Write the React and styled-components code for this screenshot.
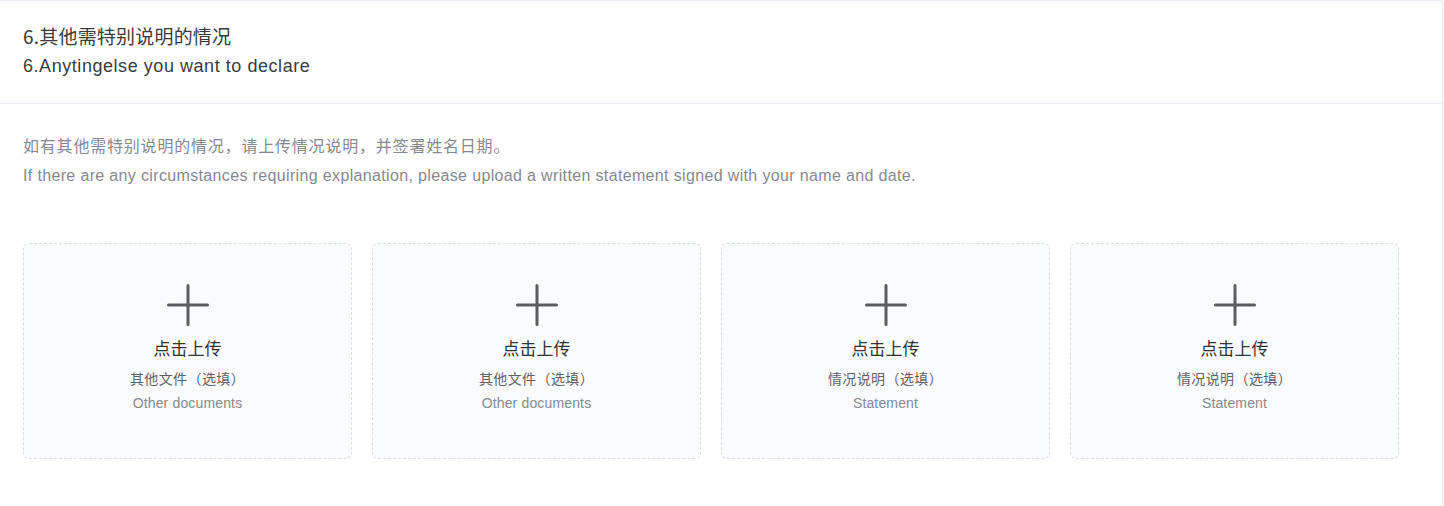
import * as React from "react"
import styled, { createGlobalStyle } from "styled-components"

const GlobalStyle = createGlobalStyle`
  html, body {
    margin: 0;
    padding: 0;
    background: #fff;
  }
  body {
    font-family: "Liberation Sans", Arial, "Noto Sans CJK SC", sans-serif;
  }
`

const uploads = [
  { zh: "其他文件（选填）", en: "Other documents" },
  { zh: "其他文件（选填）", en: "Other documents" },
  { zh: "情况说明（选填）", en: "Statement" },
  { zh: "情况说明（选填）", en: "Statement" },
]

const cjkFont = `"Noto Sans CJK SC", sans-serif`
const latinFont = `"Liberation Sans", Arial, sans-serif`

const Card = styled.section`
  width: 1443px;
  min-height: 520px;
  box-sizing: border-box;
  border-top: 1px solid #ebeef5;
  border-right: 1px solid #ebeef5;
  border-top-right-radius: 4px;
  background: #fff;
`

const Header = styled.header`
  padding: 22px 23px 0;
  height: 103px;
  box-sizing: border-box;
  border-bottom: 1px solid #ebeef5;
`

const Title = styled.div`
  height: 29px;
  font-size: ${(p) => (p.cjk ? 19 : 18)}px;
  line-height: ${(p) => (p.cjk ? 25 : 29)}px;
  letter-spacing: ${(p) => (p.cjk ? 0.2 : 0.55)}px;
  color: #3a3b3d;
  font-family: ${(p) => (p.cjk ? cjkFont : latinFont)};
`

const Body = styled.div`
  padding: 28px 23px 0;
`

const Note = styled.p`
  margin: 0;
  height: 29px;
  font-size: 16px;
  line-height: ${(p) => (p.cjk ? 27 : 29)}px;
  letter-spacing: ${(p) => (p.cjk ? 0.8 : 0.35)}px;
  color: #86898f;
  font-family: ${(p) => (p.cjk ? cjkFont : latinFont)};
`

const Uploads = styled.div`
  display: grid;
  grid-template-columns: repeat(4, 329px);
  column-gap: 20px;
  margin-top: 53px;
`

const UploadBox = styled.div`
  height: 216px;
  box-sizing: border-box;
  border: 1px dashed #dcdfe6;
  border-radius: 6px;
  background: #fafbfd;
  display: flex;
  flex-direction: column;
  align-items: center;
  padding-top: 40px;
  cursor: pointer;
`

const Plus = styled.svg`
  width: 42px;
  height: 42px;
  display: block;
`

const Action = styled.div`
  margin-top: 10px;
  font-size: 17px;
  line-height: 24px;
  color: #333;
  font-family: ${cjkFont};
`

const Hint = styled.div`
  margin-top: ${(p) => p.gap}px;
  font-size: 14px;
  line-height: 20px;
  letter-spacing: ${(p) => p.spacing || 0}px;
  color: ${(p) => p.color};
`

const PlusIcon = () => (
  <Plus viewBox="0 0 42 42">
    <path
      d="M21 1.5v39M1.5 21h39"
      stroke="#5c5d5f"
      strokeWidth="3"
      strokeLinecap="round"
      fill="none"
    />
  </Plus>
)

const App = () => (
  <>
    <GlobalStyle />
    <Card>
      <Header>
        <Title cjk>6.其他需特别说明的情况</Title>
        <Title>6.Anytingelse you want to declare</Title>
      </Header>
      <Body>
        <Note cjk>如有其他需特别说明的情况，请上传情况说明，并签署姓名日期。</Note>
        <Note>
          If there are any circumstances requiring explanation, please upload a
          written statement signed with your name and date.
        </Note>
        <Uploads>
          {uploads.map((u, i) => (
            <UploadBox key={i}>
              <PlusIcon />
              <Action>点击上传</Action>
              <Hint gap={9} spacing={0.4} color="#5f6266">
                {u.zh}
              </Hint>
              <Hint gap={4} spacing={0.15} color="#86898f">
                {u.en}
              </Hint>
            </UploadBox>
          ))}
        </Uploads>
      </Body>
    </Card>
  </>
)

export default App
